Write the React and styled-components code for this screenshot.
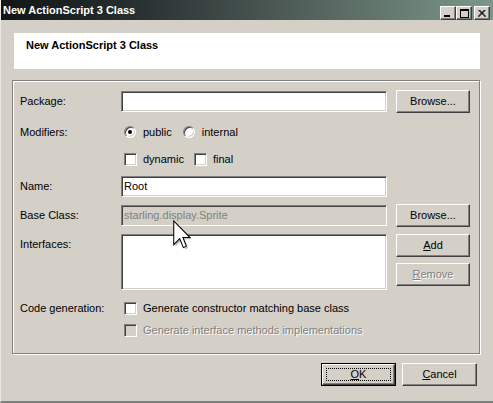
import React from 'react'
import styled, { createGlobalStyle } from 'styled-components'

const Global = createGlobalStyle`
  html, body {
    margin: 0;
    padding: 0;
    background: #d4d0c8;
    overflow: hidden;
  }
  * { box-sizing: border-box; }
`

const Window = styled.div`
  position: relative;
  width: 493px;
  height: 403px;
  display: flex;
  flex-direction: column;
  background: #d4d0c8;
  border-left: 1px solid #ece9e3;
  border-bottom: 2px solid #7f7f7f;
  font-family: "Liberation Sans", Arial, sans-serif;
  font-size: 11px;
  color: #000;
`

const TitleBar = styled.div`
  height: 20px;
  display: flex;
  align-items: flex-start;
  padding: 4px 3px 0 2px;
  background: linear-gradient(to right, #111515 0%, #252d2d 25%, #4a5753 55%, #7c988a 100%);
`

const TitleText = styled.div`
  color: #fff;
  font-weight: bold;
  font-size: 11px;
  line-height: 13px;
`

const TitleButtons = styled.div`
  margin-left: auto;
  margin-top: 2px;
  display: flex;
`

const TitleButton = styled.div`
  width: 16px;
  height: 14px;
  margin-left: ${(p) => p.$gap || 0}px;
  background: #d4d0c8;
  border-top: 1px solid #fff;
  border-left: 1px solid #fff;
  border-right: 1px solid #404040;
  border-bottom: 1px solid #404040;
  box-shadow: inset -1px -1px 0 #808080;
  display: flex;
  align-items: center;
  justify-content: center;
`

const Header = styled.div`
  margin: 13px 0 0 13px;
  width: 466px;
  height: 36px;
  background: #fff;
  padding: 6px 0 0 12px;
  font-weight: bold;
  font-size: 11px;
  line-height: 13px;
`

const Group = styled.div`
  margin: 11px 0 0 11px;
  width: 468px;
  height: 274px;
  border: 1px solid #808080;
  box-shadow: inset 1px 1px 0 #fff, 1px 1px 0 #fff;
  padding: 9px 9px 0 7px;
`

const Row = styled.div`
  display: grid;
  grid-template-columns: 92px 266px 74px;
  column-gap: 9px;
  align-items: center;
  height: ${(p) => p.$h || 20}px;
  margin-top: ${(p) => p.$mt || 0}px;
`

const Label = styled.div`
  align-self: ${(p) => (p.$top ? 'start' : 'center')};
  padding-top: ${(p) => (p.$top ? 4 : 0)}px;
  line-height: 13px;
`

const Sunken = styled.div`
  height: ${(p) => p.$h || 21}px;
  background: ${(p) => (p.$disabled ? '#d4d0c8' : '#fff')};
  border-top: 1px solid #808080;
  border-left: 1px solid #808080;
  border-right: 1px solid #fff;
  border-bottom: 1px solid #fff;
  box-shadow: inset 1px 1px 0 #404040, inset -1px -1px 0 #d4d0c8;
  padding: 3px 0 0 2px;
  line-height: 13px;
  color: ${(p) => (p.$disabled ? '#808080' : '#000')};
  align-self: ${(p) => (p.$top ? 'start' : 'center')};
`

const Button = styled.div`
  width: ${(p) => p.$w || 74}px;
  height: 23px;
  background: #d4d0c8;
  border-top: 1px solid #fff;
  border-left: 1px solid #fff;
  border-right: 1px solid #404040;
  border-bottom: 1px solid #404040;
  box-shadow: inset -1px -1px 0 #808080;
  display: flex;
  align-items: center;
  justify-content: center;
  line-height: 13px;
  color: ${(p) => (p.$disabled ? '#808080' : '#000')};
  text-shadow: ${(p) => (p.$disabled ? '1px 1px 0 #fff' : 'none')};
  u { text-decoration: underline; text-underline-offset: 1px; }
`

const DefaultButton = styled.div`
  width: 75px;
  height: 23px;
  border: 1px solid #000;
  position: relative;
  ${Button} {
    width: 73px;
    height: 21px;
  }
`

const Focus = styled.div`
  position: absolute;
  inset: 4px;
  border: 1px dotted #000;
  pointer-events: none;
`

const ButtonStack = styled.div`
  align-self: start;
  display: flex;
  flex-direction: column;
  gap: 6px;
`

const Options = styled.div`
  display: flex;
  align-items: center;
  padding-left: ${(p) => p.$pl || 3}px;
  grid-column: 2 / 4;
`

const Option = styled.label`
  display: flex;
  align-items: center;
  margin-right: ${(p) => p.$mr || 0}px;
  line-height: 13px;
  color: ${(p) => (p.$disabled ? '#808080' : '#000')};
  text-shadow: ${(p) => (p.$disabled ? '1px 1px 0 #fff' : 'none')};
`

const Radio = styled.span`
  position: relative;
  width: 12px;
  height: 12px;
  margin-right: 7px;
  border-radius: 50%;
  background: #fff;
  border-top: 1px solid #808080;
  border-left: 1px solid #808080;
  border-right: 1px solid #fff;
  border-bottom: 1px solid #fff;
  box-shadow: inset 1px 1px 0 #404040, inset -1px -1px 0 #d4d0c8;
  &::after {
    content: '';
    display: ${(p) => (p.$checked ? 'block' : 'none')};
    position: absolute;
    left: 3px;
    top: 3px;
    width: 4px;
    height: 4px;
    border-radius: 50%;
    background: #000;
  }
`

const Check = styled.span`
  width: 13px;
  height: 13px;
  margin-right: 6px;
  background: ${(p) => (p.$disabled ? '#d4d0c8' : '#fff')};
  border-top: 1px solid #808080;
  border-left: 1px solid #808080;
  border-right: 1px solid #fff;
  border-bottom: 1px solid #fff;
  box-shadow: inset 1px 1px 0 #404040, inset -1px -1px 0 #d4d0c8;
`

const Footer = styled.div`
  display: flex;
  justify-content: flex-end;
  gap: 6px;
  margin-top: 9px;
  padding-right: 16px;
`

const Cursor = styled.svg`
  position: absolute;
  left: 172px;
  top: 220px;
`

const arrow = '0.5,0.5 0.5,16.5 4.5,12.5 7,18.5 9,17.5 6.7,11.7 11.5,11.7'

const App = () => {
  return (
    <Window>
      <Global />
      <TitleBar>
        <TitleText>New ActionScript 3 Class</TitleText>
        <TitleButtons>
          <TitleButton>
            <svg width="8" height="8"><rect x="0" y="6" width="6" height="2" fill="#000" /></svg>
          </TitleButton>
          <TitleButton>
            <svg width="9" height="9"><rect x="0.5" y="0.5" width="8" height="8" fill="none" stroke="#000" /><rect x="0" y="0" width="9" height="2" fill="#000" /></svg>
          </TitleButton>
          <TitleButton $gap={2}>
            <svg width="8" height="7"><path d="M0.5 0 L7.5 7 M1.5 0 L8 6.5 M7.5 0 L0.5 7 M6.5 0 L0 6.5" stroke="#000" strokeWidth="1" /></svg>
          </TitleButton>
        </TitleButtons>
      </TitleBar>

      <Header>New ActionScript 3 Class</Header>

      <Group>
        <Row $h={23}>
          <Label>Package:</Label>
          <Sunken />
          <Button>Browse...</Button>
        </Row>
        <Row $mt={9}>
          <Label>Modifiers:</Label>
          <Options>
            <Option $mr={11}><Radio $checked />public</Option>
            <Option><Radio />internal</Option>
          </Options>
        </Row>
        <Row $mt={7}>
          <Label />
          <Options>
            <Option $mr={10}><Check />dynamic</Option>
            <Option><Check />final</Option>
          </Options>
        </Row>
        <Row $h={23} $mt={6}>
          <Label>Name:</Label>
          <Sunken>Root</Sunken>
        </Row>
        <Row $h={23} $mt={6}>
          <Label>Base Class:</Label>
          <Sunken $disabled>starling.display.Sprite</Sunken>
          <Button>Browse...</Button>
        </Row>
        <Row $h={56} $mt={7}>
          <Label $top>Interfaces:</Label>
          <Sunken $h={56} $top />
          <ButtonStack>
            <Button><span><u>A</u>dd</span></Button>
            <Button $disabled><span><u>R</u>emove</span></Button>
          </ButtonStack>
        </Row>
        <Row $mt={8}>
          <Label>Code generation:</Label>
          <Options>
            <Option><Check />Generate constructor matching base class</Option>
          </Options>
        </Row>
        <Row $mt={2}>
          <Label />
          <Options>
            <Option $disabled><Check $disabled />Generate interface methods implementations</Option>
          </Options>
        </Row>
      </Group>

      <Footer>
        <DefaultButton>
          <Button><span><u>O</u>K</span></Button>
          <Focus />
        </DefaultButton>
        <Button $w={75}><span><u>C</u>ancel</span></Button>
      </Footer>

      <Cursor width="20" height="30" viewBox="0 0 13.5 20">
        <polygon points={arrow} transform="translate(1.2,1.2)" fill="rgba(0,0,0,0.25)" />
        <polygon points={arrow} fill="#fff" stroke="#000" strokeWidth="0.7" strokeLinejoin="miter" />
      </Cursor>
    </Window>
  )
}

export default App
